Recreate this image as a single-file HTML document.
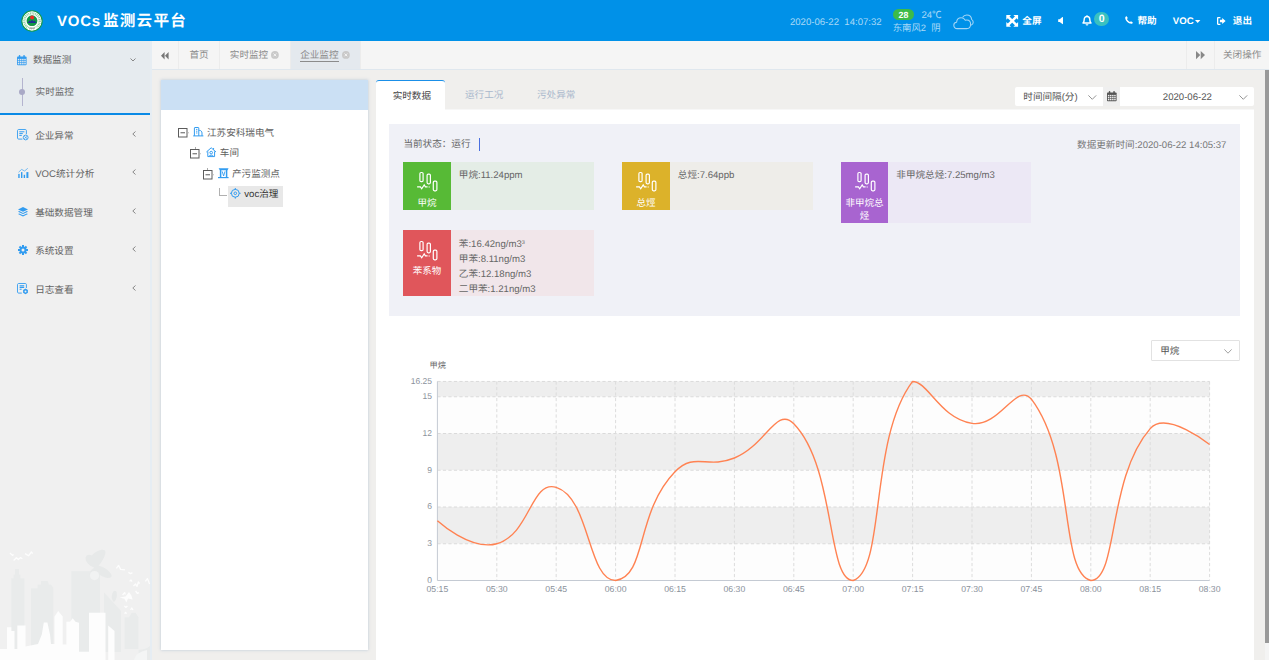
<!DOCTYPE html>
<html lang="zh"><head><meta charset="utf-8"><title>VOCs监测云平台</title>
<style>
html,body{margin:0;padding:0;}
body{text-rendering:geometricPrecision;width:1269px;height:660px;overflow:hidden;position:relative;background:#f0efed;font-family:"Liberation Sans","Noto Sans CJK SC",sans-serif;}
.t{position:absolute;white-space:nowrap;}
.r{position:absolute;}
svg{position:absolute;overflow:visible;}
.b{font-weight:bold;}
</style></head><body>

<div class="r" style="left:0px;top:0px;width:1269px;height:41px;background:#0091e8;"></div>
<svg style="left:20.6px;top:10.2px" width="22" height="22" viewBox="0 0 22 22">
<circle cx="11" cy="11" r="10.2" fill="#fff" stroke="#149a48" stroke-width="1.1"/>
<circle cx="11" cy="11" r="7.7" fill="none" stroke="#8fd3a4" stroke-width="2.4" stroke-dasharray="1 .7"/>
<path d="M5.4 16.6A8 8 0 0 0 16.6 16.6L15 19.4H7Z" fill="#fff"/>
<rect x="8.2" y="17.6" width="5.6" height="1.3" fill="#9a9a9a" opacity=".8"/>
<circle cx="11" cy="10.7" r="5.4" fill="#0f9a44"/>
<path d="M6 12.6A5.4 5.4 0 0 0 16 12.6L14.6 14.8 11 16.1 7.4 14.8Z" fill="#0c4a2c"/>
<path d="M6.6 13 L8.6 10.6 L9.6 11.6 L11 9.8 L12.4 11.6 L13.4 10.6 L15.4 13Z" fill="#1e2c96"/>
<circle cx="11.1" cy="7.5" r="2" fill="#ee2a24"/>
</svg>
<span class="t b" style="left:56.9px;top:11.60px;font-size:15px;line-height:20px;color:#fff;letter-spacing:0.8px;">VOCs</span>
<span class="t b" style="left:103px;top:11.90px;font-size:15.6px;line-height:20px;color:#fff;letter-spacing:1.2px;">监测云平台</span>
<span class="t " style="left:789.9px;top:16.00px;font-size:9.6px;line-height:14px;color:#a9d9f7;">2020-06-22&nbsp; 14:07:32</span>
<div class="r" style="left:892.7px;top:9px;width:21.3px;height:11.4px;background:#3dbb48;border-radius:6px;"></div>
<span class="t" style="left:803.40px;width:200px;text-align:center;top:8.80px;font-size:8.8px;line-height:12px;color:#fff;font-weight:bold;">28</span>
<span class="t " style="left:921.4px;top:9.00px;font-size:9.6px;line-height:14px;color:#a9d9f7;">24℃</span>
<span class="t " style="left:892.7px;top:20.80px;font-size:9.4px;line-height:14px;color:#a9d9f7;">东南风2&nbsp; 阴</span>
<svg style="left:953px;top:13.5px" width="21" height="16" viewBox="0 0 21 16" fill="none" stroke="#a4d6f6" stroke-width="1.05" stroke-linejoin="round">
<path d="M4.2 14.6 C2 14.6 .8 13 .8 11.3 C.8 9.6 2 8.3 3.6 8.2 C3.8 5.6 5.8 3.8 8.2 3.8 C10 3.8 11.5 4.8 12.3 6.3 C12.8 6.1 13.3 6 13.8 6 C16 6 17.6 7.8 17.6 10.2 C17.6 12.8 15.8 14.6 13.6 14.6 Z"/>
<path d="M9.5 3.6 C10.4 2 12 1 13.8 1 C16.4 1 18.4 2.9 18.6 5.4 C19.6 6 20.2 7.1 20.2 8.3 C20.2 9.6 19.4 10.8 18.2 11.3"/>
</svg>
<svg style="left:1006.4px;top:14.8px" width="12.4" height="11.8" viewBox="0 0 12 12" fill="#fff">
<path d="M0 0H4.8L0 4.8ZM12 0V4.8L7.2 0ZM0 12V7.2L4.8 12ZM12 12H7.2L12 7.2Z"/>
<path d="M1.6 1.6L10.4 10.4M10.4 1.6L1.6 10.4" stroke="#fff" stroke-width="2.5"/>
</svg>
<span class="t b" style="left:1022.3px;top:14.80px;font-size:9.6px;line-height:14px;color:#fff;">全屏</span>
<svg style="left:1057.6px;top:17px" width="5" height="7.2" viewBox="0 0 5 7.2" fill="#fff"><path d="M.2 2.3h1.5L4.4 .1Q5 -.2 5 .5v6.2Q5 7.4 4.4 7.1L1.7 4.9H.2z"/></svg>
<svg style="left:1082.3px;top:15.1px" width="10" height="10.6" viewBox="0 0 10 10.4" fill="none" stroke="#fff" stroke-width="1.45" stroke-linejoin="round">
<path d="M1 8 C2 7 2.2 6 2.2 4.4 C2.2 2.6 3.4 1.4 5 1.4 C6.6 1.4 7.8 2.6 7.8 4.4 C7.8 6 8 7 9 8 Z"/>
<path d="M5 .2v1.2M4 9.2 C4.2 10 5.8 10 6 9.2" stroke-width="1.1"/></svg>
<div class="r" style="left:1094.4px;top:12.2px;width:14.2px;height:14.2px;background:#3ac1c0;border-radius:7.1px;"></div>
<span class="t" style="left:1001.60px;width:200px;text-align:center;top:13.10px;font-size:10.6px;line-height:12px;color:#fff;font-weight:bold;">0</span>
<svg style="left:1125.1px;top:16.3px" width="8" height="8" viewBox="0 0 8 8" fill="#fff"><path d="M1.6 0.2 C1 0.2 .2 .9 .2 1.6 C.2 4.8 3.2 7.8 6.4 7.8 C7.1 7.8 7.8 7 7.8 6.4 L6 5.2 L5 6 C3.8 5.6 2.4 4.2 2 3 L2.8 2 Z"/></svg>
<span class="t b" style="left:1137.4px;top:14.80px;font-size:9.6px;line-height:14px;color:#fff;">帮助</span>
<span class="t b" style="left:1172.8px;top:14.80px;font-size:9.6px;line-height:14px;color:#fff;">VOC</span>
<svg style="left:1195px;top:20.3px" width="5.4" height="3" viewBox="0 0 5.4 3" fill="#fff"><path d="M0 0h5.4L2.7 3z"/></svg>
<svg style="left:1216.7px;top:16.6px" width="8.6" height="8" viewBox="0 0 8.6 8" fill="#fff">
<path d="M0 1.2 C0 .5 .5 0 1.2 0H3.4V1.3H1.5 C1.4 1.3 1.3 1.4 1.3 1.5V6.5 C1.3 6.6 1.4 6.7 1.5 6.7H3.4V8H1.2 C.5 8 0 7.5 0 6.8Z"/>
<path d="M2.9 2.8H5.2V1L8.6 4 5.2 7V5.2H2.9Z"/></svg>
<span class="t b" style="left:1232.8px;top:14.80px;font-size:9.6px;line-height:14px;color:#fff;">退出</span>
<div class="r" style="left:0px;top:41px;width:150px;height:619px;background:#f0f0f0;"></div>
<div class="r" style="left:150px;top:41px;width:1.5px;height:619px;background:#e6edf3;"></div>
<div class="r" style="left:0px;top:41px;width:150px;height:72px;background:#e6ebef;"></div>
<div class="r" style="left:0px;top:112.8px;width:150px;height:2.6px;background:#0a8ae6;"></div>
<svg style="left:17px;top:54.8px" width="9.6" height="10.2" viewBox="0 0 9.6 10.2">
<rect x="0" y="1.4" width="9.6" height="8.8" rx="1" fill="#329cf0"/>
<rect x="1.8" y="0" width="1.5" height="2.6" rx=".7" fill="#329cf0"/><rect x="6.3" y="0" width="1.5" height="2.6" rx=".7" fill="#329cf0"/>
<g fill="#e6ebef" opacity=".95" transform="translate(-.1 -.1) scale(1.02)">
<rect x=".9" y="3.9" width="1.5" height="1.4"/><rect x="3" y="3.9" width="1.5" height="1.4"/><rect x="5.1" y="3.9" width="1.5" height="1.4"/><rect x="7.2" y="3.9" width="1.5" height="1.4"/>
<rect x=".9" y="5.9" width="1.5" height="1.4"/><rect x="3" y="5.9" width="1.5" height="1.4"/><rect x="5.1" y="5.9" width="1.5" height="1.4"/><rect x="7.2" y="5.9" width="1.5" height="1.4"/>
<rect x=".9" y="7.9" width="1.5" height="1.4"/><rect x="3" y="7.9" width="1.5" height="1.4"/><rect x="5.1" y="7.9" width="1.5" height="1.4"/><rect x="7.2" y="7.9" width="1.5" height="1.4"/>
</g></svg>
<span class="t " style="left:32.9px;top:54.20px;font-size:9.6px;line-height:14px;color:#636363;">数据监测</span>
<svg style="left:130px;top:57.8px" width="6" height="4" viewBox="0 0 6 4" fill="none" stroke="#888" stroke-width="1"><path d="M.5 .5L3 3 5.5 .5"/></svg>
<div class="r" style="left:21.9px;top:78.2px;width:0.8px;height:27.6px;background:#b4b4cf;"></div>
<div class="r" style="left:19px;top:89px;width:6px;height:6px;background:#a9a9c6;border-radius:3px;"></div>
<span class="t " style="left:35.6px;top:86.40px;font-size:9.6px;line-height:14px;color:#6a6a6a;">实时监控</span>
<span class="t " style="left:35.2px;top:129.50px;font-size:9.6px;line-height:14px;color:#636363;">企业异常</span>
<svg style="left:132.4px;top:131.1px" width="4" height="6" viewBox="0 0 4 6" fill="none" stroke="#888" stroke-width="1"><path d="M3.5 .5L.8 3 3.5 5.5"/></svg>
<span class="t " style="left:35.2px;top:167.80px;font-size:9.6px;line-height:14px;color:#636363;">VOC统计分析</span>
<svg style="left:132.4px;top:169.4px" width="4" height="6" viewBox="0 0 4 6" fill="none" stroke="#888" stroke-width="1"><path d="M3.5 .5L.8 3 3.5 5.5"/></svg>
<span class="t " style="left:35.2px;top:206.50px;font-size:9.6px;line-height:14px;color:#636363;">基础数据管理</span>
<svg style="left:132.4px;top:208.1px" width="4" height="6" viewBox="0 0 4 6" fill="none" stroke="#888" stroke-width="1"><path d="M3.5 .5L.8 3 3.5 5.5"/></svg>
<span class="t " style="left:35.2px;top:244.60px;font-size:9.6px;line-height:14px;color:#636363;">系统设置</span>
<svg style="left:132.4px;top:246.2px" width="4" height="6" viewBox="0 0 4 6" fill="none" stroke="#888" stroke-width="1"><path d="M3.5 .5L.8 3 3.5 5.5"/></svg>
<span class="t " style="left:35.2px;top:283.50px;font-size:9.6px;line-height:14px;color:#636363;">日志查看</span>
<svg style="left:132.4px;top:285.1px" width="4" height="6" viewBox="0 0 4 6" fill="none" stroke="#888" stroke-width="1"><path d="M3.5 .5L.8 3 3.5 5.5"/></svg>
<svg style="left:17px;top:129.2px" width="11.6" height="11.6" viewBox="0 0 11.6 11.6" fill="none" stroke="#329cf0" stroke-width=".9">
<path d="M9.4 5.2V1.6 C9.4 1 9 .5 8.4 .5H1.6 C1 .5 .5 1 .5 1.6V9 C.5 9.6 1 10.1 1.6 10.1H5.4"/>
<path d="M2.3 2.8H7.4M2.3 4.6H5.8M2.3 6.4H4.8" stroke-width="1"/>
<circle cx="8.7" cy="8.5" r="2.4"/><path d="M7.4 7.4l2.6 2.2M10 7.4L7.4 9.6" stroke-width=".7"/></svg>
<svg style="left:17.7px;top:168px" width="10.6" height="10.2" viewBox="0 0 10.6 10.2" fill="#329cf0">
<rect x=".25" y="5.9" width="1.4" height="4.1"/><rect x="3" y="4.1" width="1.4" height="5.9"/><rect x="5.7" y="6.8" width="1.4" height="3.2"/><rect x="8.4" y="4.1" width="2" height="5.9"/>
<path d="M.5 4.3 L3.6 1.4 L6.6 3 L9.8 .3" fill="none" stroke="#329cf0" stroke-width=".8" opacity=".8"/></svg>
<svg style="left:17.8px;top:206.8px" width="10" height="9.6" viewBox="0 0 10 9.6" fill="#329cf0">
<path d="M5 0 L10 2.4 L5 4.8 L0 2.4Z"/>
<path d="M1.2 4.1 L0 4.7 L5 7.1 L10 4.7 L8.8 4.1 L5 5.9Z"/>
<path d="M1.2 6.4 L0 7 L5 9.4 L10 7 L8.8 6.4 L5 8.2Z"/></svg>
<svg style="left:18px;top:245.0px" width="10" height="10" viewBox="-5 -5 10 10">
<g fill="#329cf0"><circle r="3.5"/><rect x="-1" y="-5" width="2" height="3" transform="rotate(0)"/><rect x="-1" y="-5" width="2" height="3" transform="rotate(45)"/><rect x="-1" y="-5" width="2" height="3" transform="rotate(90)"/><rect x="-1" y="-5" width="2" height="3" transform="rotate(135)"/><rect x="-1" y="-5" width="2" height="3" transform="rotate(180)"/><rect x="-1" y="-5" width="2" height="3" transform="rotate(225)"/><rect x="-1" y="-5" width="2" height="3" transform="rotate(270)"/><rect x="-1" y="-5" width="2" height="3" transform="rotate(315)"/></g><circle r="1.5" fill="#f0f0f0"/></svg>
<svg style="left:17px;top:283px" width="11.6" height="11.6" viewBox="0 0 11.6 11.6" fill="none" stroke="#329cf0" stroke-width=".9">
<path d="M9.4 5V1.6 C9.4 1 9 .5 8.4 .5H1.6 C1 .5 .5 1 .5 1.6V9 C.5 9.6 1 10.1 1.6 10.1H4.8"/>
<path d="M2.6 2.8H7.2M2.6 4.4H7.2M2.6 6.2H4.6" stroke-width="1.1"/>
<path d="M8.5 5.6L10.9 7V9.8L8.5 11.2 6.1 9.8V7Z" fill="#329cf0" stroke="none"/><circle cx="8.5" cy="8.4" r="1" fill="#f0f0f0" stroke="none"/></svg>
<svg style="left:0;top:540px" width="150" height="120" viewBox="0 0 150 120">
<g fill="#e9ebeb">
<path d="M11.3 109V38.2H13.6V34.5H15V29H19V34.5H20.4V38.2H24.5V109Z"/>
<path d="M31 107V48.2H37.6V44.5H41V41H47.6L49 44.5H51L53.3 48.2V107Z"/>
<path d="M71.3 112V31.3H100V112Z"/>
<path d="M104 112V52.4L121 71V112Z"/>
<path d="M124.5 109V77.3H129L131.8 72.7H135.5L138.5 77.3V109Z"/>
<path d="M138.5 110Q146 109.4 150 106V120H138.5Z"/>
</g>
<g fill="#e7e9e9">
<path d="M85.6 19 C85 15.5 88.5 13.8 92 15.6 C95 11.5 102 8.6 105 10.4 C107 13 102.5 21.5 98.6 25.6 C103.5 27 110.5 31 111.8 36 C110.5 39.5 103.5 38 98 33.4 C96 36.5 91.5 38.4 89.5 35.6 C88.8 32.6 91.6 29.4 94.4 27.6 C90.4 26.4 86.2 23 85.6 19Z"/>
<path d="M112 55 C112.6 51 115 49.6 116.4 51.6 C117.6 55.4 116.4 60.4 113.8 62 C112 60.4 111.4 57.6 112 55Z"/>
</g>
<circle cx="94.5" cy="35.6" r="4.6" fill="#f1f2f2"/>
<g fill="#fdfdfd">
<path d="M0 109H7V87.3H11.3V91H14.5V109H17.3V85.5H25.5V106.4L38 104L39 120H0Z"/>
<path d="M38 120V104L41.8 94.5L43.8 82.6H47.4L50 94.5L51 104V120Z"/>
<path d="M51 120V104L54.5 104V76.4L58.2 71L62.7 76.4V104.5H66.4V81.8H70L72.7 78.2L75.5 81.8L79 82.7V111.8H89V72.7H105.5V120Z"/>
<path d="M108.2 120V85.5L114.5 91V120Z"/>
<path d="M134 120Q136 112 147 110V120Z" fill="#f4f5f5"/>
</g>
<g stroke="#fdfdfd" stroke-width="1.3" fill="none" stroke-linejoin="round">
<path d="M10 13L12.4 15.4 13.6 14.4M13.6 20.4L16.4 17.8 18.4 19.6 20.4 17.6 22.4 18.8M25 13.6L28.6 15.8 31.4 12 32.6 13.6" />
<path d="M116.4 28.4L118.6 25.4 120.6 29.4 125 29.8M128.4 32.4L130.6 33.6 132.4 32.6M129.6 41.4L131 40 132 41.6M133.4 46L135.6 44 137 46.4 138.4 42 139.6 43.6M145.4 41.4L147.4 38.6 149.6 44M135.6 51L137.4 53.4 139 52.6M122.6 55L124.6 52.6 125.4 54.4M124.4 66L126 67.4 127.4 66M130.6 70L131.8 68 133 70M124.6 73.6L125.6 72.4 126.6 73.6" />
</g>
<path d="M119.6 57.6L125.6 56.6 129 52 131.4 55.6 132.6 59.4 128 58.6 126.4 62.4 124.4 58.8Z" fill="#fdfdfd"/>
</svg>
<div class="r" style="left:151.5px;top:41px;width:1117.5px;height:28px;background:#f5f5f5;"></div>
<div class="r" style="left:151.5px;top:69px;width:1117.5px;height:1px;background:#dfe7ee;"></div>
<div class="r" style="left:290px;top:41px;width:70.5px;height:28px;background:#e4e9ee;"></div>
<div class="r" style="left:178px;top:41px;width:0.7px;height:28px;background:#ececec;"></div>
<div class="r" style="left:219.3px;top:41px;width:0.7px;height:28px;background:#ececec;"></div>
<div class="r" style="left:290px;top:41px;width:0.7px;height:28px;background:#ececec;"></div>
<div class="r" style="left:360.3px;top:41px;width:0.7px;height:28px;background:#ececec;"></div>
<div class="r" style="left:1186.3px;top:41px;width:0.7px;height:28px;background:#ececec;"></div>
<div class="r" style="left:1214px;top:41px;width:0.7px;height:28px;background:#ececec;"></div>
<svg style="left:160.8px;top:51.6px" width="7.6" height="7.6" viewBox="0 0 7.6 7.6" fill="#777"><path d="M3.6 0v7.6L0 3.8zM7.6 0v7.6L4 3.8z"/></svg>
<span class="t " style="left:189.5px;top:48.90px;font-size:9.6px;line-height:14px;color:#8c8c8c;">首页</span>
<span class="t " style="left:229.8px;top:48.90px;font-size:9.6px;line-height:14px;color:#8c8c8c;">实时监控</span>
<span class="t " style="left:300.2px;top:48.90px;font-size:9.6px;line-height:14px;color:#8c8c8c;">企业监控</span>
<div class="r" style="left:300.2px;top:60.6px;width:38.4px;height:0.7px;background:#8c8c8c;"></div>
<svg style="left:271.3px;top:51.2px" width="7.8" height="7.8" viewBox="0 0 8 8"><circle cx="4" cy="4" r="4" fill="#c9c9c9"/><path d="M2.6 2.6l2.8 2.8M5.4 2.6L2.6 5.4" stroke="#f5f5f5" stroke-width="1"/></svg>
<svg style="left:341.70000000000005px;top:51.2px" width="7.8" height="7.8" viewBox="0 0 8 8"><circle cx="4" cy="4" r="4" fill="#c9c9c9"/><path d="M2.6 2.6l2.8 2.8M5.4 2.6L2.6 5.4" stroke="#f5f5f5" stroke-width="1"/></svg>
<svg style="left:1195.6px;top:51.4px" width="9" height="8.2" preserveAspectRatio="none" viewBox="0 0 7.6 7.6" fill="#888"><path d="M0 0v7.6L3.6 3.8zM4 0v7.6L7.6 3.8z"/></svg>
<span class="t " style="left:1223px;top:49.20px;font-size:9.6px;line-height:14px;color:#8c8c8c;">关闭操作</span>
<div class="r" style="left:161.3px;top:80.3px;width:206.7px;height:569.7px;background:#fff;box-shadow:0 0 3px rgba(100,140,180,.38);"></div>
<div class="r" style="left:161.3px;top:80.3px;width:206.7px;height:30.2px;background:#cbe0f4;"></div>
<svg style="left:177.8px;top:128.2px" width="13" height="10" viewBox="0 0 13 10"><rect x=".5" y=".5" width="8.5" height="8.5" fill="#fff" stroke="#5c5c5c" stroke-width="1"/><path d="M2.5 4.75h4.5" stroke="#6a6a6a" stroke-width="1.1"/><path d="M10 4.75h2" stroke="#aaa" stroke-width=".8" stroke-dasharray="1 1"/></svg>
<svg style="left:193.2px;top:127.4px" width="10.4" height="9.4" viewBox="0 0 10.4 9.4" fill="none" stroke="#329cf0" stroke-width="1">
<path d="M.2 8.9H10.4"/><path d="M1.4 8.9V1 C1.4 .7 1.6 .5 1.9 .5H5.3 C5.6 .5 5.8 .7 5.8 1V8.9"/><path d="M5.8 3.4H6.6 C8 3.4 9 4.6 9 6V8.9"/>
<path d="M3 2.4h1.4M3 4.2h1.4M3 6h1.4" stroke-width=".9"/></svg>
<span class="t " style="left:207px;top:126.50px;font-size:9.6px;line-height:14px;color:#5e5e5e;">江苏安科瑞电气</span>
<svg style="left:190.2px;top:149.2px" width="13" height="10" viewBox="0 0 13 10"><rect x=".5" y=".5" width="8.5" height="8.5" fill="#fff" stroke="#5c5c5c" stroke-width="1"/><path d="M2.5 4.75h4.5" stroke="#6a6a6a" stroke-width="1.1"/><path d="M10 4.75h2" stroke="#aaa" stroke-width=".8" stroke-dasharray="1 1"/></svg><div class="r" style="left:194.6px;top:146.79999999999998px;width:0.8px;height:2.4px;background:#aaa;"></div>
<svg style="left:205.6px;top:147.2px" width="10.4" height="10.4" viewBox="0 0 10.4 10.4" fill="none" stroke="#329cf0" stroke-width="1" stroke-linejoin="round">
<path d="M.4 5 L5.2 .8 L10 5"/><path d="M1.8 4.4V9.6H8.6V4.4"/><path d="M7.6 1v1.6" />
<circle cx="5.2" cy="5.6" r="1.3"/><path d="M3 9.2 C3.4 7.8 7 7.8 7.4 9.2" /></svg>
<span class="t " style="left:219.8px;top:147.10px;font-size:9.6px;line-height:14px;color:#5e5e5e;">车间</span>
<svg style="left:202.7px;top:170px" width="13" height="10" viewBox="0 0 13 10"><rect x=".5" y=".5" width="8.5" height="8.5" fill="#fff" stroke="#5c5c5c" stroke-width="1"/><path d="M2.5 4.75h4.5" stroke="#6a6a6a" stroke-width="1.1"/><path d="M10 4.75h2" stroke="#aaa" stroke-width=".8" stroke-dasharray="1 1"/></svg><div class="r" style="left:207.1px;top:167.6px;width:0.8px;height:2.4px;background:#aaa;"></div>
<svg style="left:218px;top:168px" width="10.6" height="10.2" viewBox="0 0 10.6 10.2" fill="none" stroke="#329cf0" stroke-width="1">
<path d="M.6 .3H10.6L9.6 2.2H1.8Z" fill="#329cf0" stroke="none"/><path d="M2.6 2V9M8.6 2V9" stroke-width="1.5"/><path d="M4.2 3.4 L5.6 8 L7 3.4" stroke-width=".9"/><path d="M0 9.6H10.6" stroke-width="1.2"/></svg>
<span class="t " style="left:232px;top:167.50px;font-size:9.6px;line-height:14px;color:#5e5e5e;">产污监测点</span>
<div class="r" style="left:219.4px;top:188.2px;width:0.8px;height:7.2px;background:#b0b0b0;"></div>
<div class="r" style="left:219.4px;top:194.8px;width:7.2px;height:0.8px;background:#b0b0b0;"></div>
<div class="r" style="left:228.2px;top:186.1px;width:55px;height:20.5px;background:#e8e8e8;"></div>
<svg style="left:230.4px;top:188.2px" width="10.6" height="10.6" viewBox="0 0 10.6 10.6" fill="none" stroke="#329cf0" stroke-width="1">
<circle cx="5.3" cy="5.3" r="3.9"/><circle cx="5.3" cy="5.3" r="1.3"/><path d="M5.3 0v1.6M5.3 9v1.6M0 5.3h1.6M9 5.3h1.6"/></svg>
<span class="t " style="left:244.3px;top:188.00px;font-size:9.6px;line-height:14px;color:#333;">voc治理</span>
<div class="r" style="left:375.8px;top:110px;width:878px;height:550px;background:#fff;"></div>
<div class="r" style="left:375.8px;top:109.3px;width:878px;height:0.8px;background:#f7f7f7;"></div>
<div class="r" style="left:375.8px;top:80.2px;width:69.4px;height:30px;background:#fff;border-top:1.6px solid #1a8fe8;border-radius:3px 3px 0 0;box-sizing:border-box;"></div>
<span class="t " style="left:392.7px;top:89.60px;font-size:9.6px;line-height:14px;color:#444;">实时数据</span>
<span class="t " style="left:465px;top:88.80px;font-size:9.6px;line-height:14px;color:#a9b8cc;">运行工况</span>
<span class="t " style="left:537px;top:88.80px;font-size:9.6px;line-height:14px;color:#a9b8cc;">污处异常</span>
<div class="r" style="left:1014.8px;top:86.5px;width:88.4px;height:19.5px;background:#fff;border-radius:2px 0 0 2px;"></div>
<span class="t " style="left:1023.3px;top:90.90px;font-size:9.6px;line-height:14px;color:#555;">时间间隔(分)</span>
<svg style="left:1088px;top:94.6px" width="8.6" height="5" viewBox="0 0 8.6 5" fill="none" stroke="#888" stroke-width=".9"><path d="M.4 .4L4.3 4.3 8.2 .4"/></svg>
<div class="r" style="left:1103.2px;top:86.5px;width:17.2px;height:19.5px;background:#efefef;"></div>
<svg style="left:1107px;top:91.2px" width="9.6" height="10.2" viewBox="0 0 9.6 10.2">
<rect x="0" y="1.4" width="9.6" height="8.8" rx=".8" fill="#555"/>
<rect x="1.8" y="0" width="1.5" height="2.6" rx=".7" fill="#555"/><rect x="6.3" y="0" width="1.5" height="2.6" rx=".7" fill="#555"/>
<g fill="#efefef">
<rect x=".9" y="3.9" width="1.5" height="1.4"/><rect x="3" y="3.9" width="1.5" height="1.4"/><rect x="5.1" y="3.9" width="1.5" height="1.4"/><rect x="7.2" y="3.9" width="1.5" height="1.4"/>
<rect x=".9" y="5.9" width="1.5" height="1.4"/><rect x="3" y="5.9" width="1.5" height="1.4"/><rect x="5.1" y="5.9" width="1.5" height="1.4"/><rect x="7.2" y="5.9" width="1.5" height="1.4"/>
<rect x=".9" y="7.9" width="1.5" height="1.4"/><rect x="3" y="7.9" width="1.5" height="1.4"/><rect x="5.1" y="7.9" width="1.5" height="1.4"/><rect x="7.2" y="7.9" width="1.5" height="1.4"/>
</g></svg>
<div class="r" style="left:1120.4px;top:86.5px;width:133.4px;height:19.5px;background:#fff;border-radius:0 2px 2px 0;"></div>
<span class="t " style="left:1162.8px;top:90.90px;font-size:9.6px;line-height:14px;color:#555;">2020-06-22</span>
<svg style="left:1239px;top:94.6px" width="8.6" height="5" viewBox="0 0 8.6 5" fill="none" stroke="#888" stroke-width=".9"><path d="M.4 .4L4.3 4.3 8.2 .4"/></svg>
<div class="r" style="left:389.2px;top:123.8px;width:850.8px;height:192.2px;background:#f0f1f7;"></div>
<span class="t " style="left:403.4px;top:138.40px;font-size:9.6px;line-height:14px;color:#666;">当前状态：运行</span>
<div class="r" style="left:479.1px;top:137.5px;width:1px;height:13.6px;background:#4a6fe0;"></div>
<span class="t" style="right:42.60px;top:138.60px;font-size:9.6px;line-height:14px;color:#777;">数据更新时间:2020-06-22 14:05:37</span>
<div class="r" style="left:403px;top:161.6px;width:47.6px;height:48px;background:#57ba36;"></div><div class="r" style="left:450.6px;top:161.6px;width:143.2px;height:48px;background:#e4ede6;"></div><svg style="left:417px;top:172.29999999999998px" width="21.4" height="20" viewBox="0 0 21.4 20" fill="none" stroke="#fff" stroke-width="1.2">
<rect x="2.9" y=".5" width="3.2" height="9.2" rx="1.2"/><rect x="10.1" y="2.1" width="3.3" height="9.7" rx="1.2"/><rect x="16.3" y="9.2" width="3.6" height="9.6" rx="1.2"/>
<path d="M.1 14.9H3.4L4.7 16.8 7.2 12.9 8.4 14.9H10.6M11.6 15h1.2" stroke-width="1.1"/></svg><span class="t" style="left:326.90px;width:200px;text-align:center;top:196.80px;font-size:9.5px;line-height:13px;color:#fff;">甲烷</span><span class="t " style="left:458.8px;top:168.80px;font-size:9.6px;line-height:14px;color:#666;">甲烷:11.24ppm</span>
<div class="r" style="left:622px;top:161.6px;width:47.6px;height:48px;background:#dcb22a;"></div><div class="r" style="left:669.6px;top:161.6px;width:143.2px;height:48px;background:#eeede9;"></div><svg style="left:636px;top:172.29999999999998px" width="21.4" height="20" viewBox="0 0 21.4 20" fill="none" stroke="#fff" stroke-width="1.2">
<rect x="2.9" y=".5" width="3.2" height="9.2" rx="1.2"/><rect x="10.1" y="2.1" width="3.3" height="9.7" rx="1.2"/><rect x="16.3" y="9.2" width="3.6" height="9.6" rx="1.2"/>
<path d="M.1 14.9H3.4L4.7 16.8 7.2 12.9 8.4 14.9H10.6M11.6 15h1.2" stroke-width="1.1"/></svg><span class="t" style="left:545.90px;width:200px;text-align:center;top:196.80px;font-size:9.5px;line-height:13px;color:#fff;">总烴</span><span class="t " style="left:677.8px;top:168.80px;font-size:9.6px;line-height:14px;color:#666;">总烴:7.64ppb</span>
<div class="r" style="left:840.5px;top:161.6px;width:47.6px;height:61.7px;background:#a864d0;"></div><div class="r" style="left:888.1px;top:161.6px;width:143.2px;height:61.7px;background:#ece8f5;"></div><svg style="left:854.5px;top:172.29999999999998px" width="21.4" height="20" viewBox="0 0 21.4 20" fill="none" stroke="#fff" stroke-width="1.2">
<rect x="2.9" y=".5" width="3.2" height="9.2" rx="1.2"/><rect x="10.1" y="2.1" width="3.3" height="9.7" rx="1.2"/><rect x="16.3" y="9.2" width="3.6" height="9.6" rx="1.2"/>
<path d="M.1 14.9H3.4L4.7 16.8 7.2 12.9 8.4 14.9H10.6M11.6 15h1.2" stroke-width="1.1"/></svg><span class="t" style="left:764.40px;width:200px;text-align:center;top:196.80px;font-size:9.5px;line-height:13px;color:#fff;">非甲烷总</span><span class="t" style="left:764.40px;width:200px;text-align:center;top:210.10px;font-size:9.5px;line-height:13px;color:#fff;">烃</span><span class="t " style="left:896.3px;top:168.80px;font-size:9.6px;line-height:14px;color:#666;">非甲烷总烃:7.25mg/m3</span>
<div class="r" style="left:403px;top:230px;width:47.6px;height:66.4px;background:#e0565b;"></div><div class="r" style="left:450.6px;top:230px;width:143.2px;height:66.4px;background:#f1e6ea;"></div><svg style="left:417px;top:240.7px" width="21.4" height="20" viewBox="0 0 21.4 20" fill="none" stroke="#fff" stroke-width="1.2">
<rect x="2.9" y=".5" width="3.2" height="9.2" rx="1.2"/><rect x="10.1" y="2.1" width="3.3" height="9.7" rx="1.2"/><rect x="16.3" y="9.2" width="3.6" height="9.6" rx="1.2"/>
<path d="M.1 14.9H3.4L4.7 16.8 7.2 12.9 8.4 14.9H10.6M11.6 15h1.2" stroke-width="1.1"/></svg><span class="t" style="left:326.90px;width:200px;text-align:center;top:265.20px;font-size:9.5px;line-height:13px;color:#fff;">苯系物</span><span class="t " style="left:458.8px;top:237.90px;font-size:9.6px;line-height:14px;color:#666;">苯:16.42ng/m3<span style='font-size:5.5px;position:relative;top:-3.4px'>3</span></span><span class="t " style="left:458.8px;top:253.00px;font-size:9.6px;line-height:14px;color:#666;">甲苯:8.11ng/m3</span><span class="t " style="left:458.8px;top:268.10px;font-size:9.6px;line-height:14px;color:#666;">乙苯:12.18ng/m3</span><span class="t " style="left:458.8px;top:283.20px;font-size:9.6px;line-height:14px;color:#666;">二甲苯:1.21ng/m3</span>
<div class="r" style="left:1150.8px;top:340px;width:89px;height:20.8px;background:#fff;border:1px solid #e2e2e2;box-sizing:border-box;border-radius:1px;"></div>
<span class="t " style="left:1160.2px;top:344.60px;font-size:9.6px;line-height:14px;color:#555;">甲烷</span>
<svg style="left:1224.4px;top:349px" width="8" height="5" viewBox="0 0 8 5" fill="none" stroke="#999" stroke-width=".9"><path d="M.4 .4L4 4.2 7.6 .4"/></svg>
<svg style="left:0;top:0" width="1269" height="660" viewBox="0 0 1269 660"><rect x="437.4" y="381.44" width="772.20" height="15.31" fill="#eeeeee"/><rect x="437.4" y="396.75" width="772.20" height="36.75" fill="#fdfdfd"/><rect x="437.4" y="433.50" width="772.20" height="36.75" fill="#eeeeee"/><rect x="437.4" y="470.25" width="772.20" height="36.75" fill="#fdfdfd"/><rect x="437.4" y="507.00" width="772.20" height="36.75" fill="#eeeeee"/><rect x="437.4" y="543.75" width="772.20" height="36.75" fill="#fdfdfd"/><path d="M437.4 543.75H1209.6" stroke="#dadada" stroke-width="1" stroke-dasharray="3.2 2.3" fill="none"/><path d="M437.4 507.00H1209.6" stroke="#dadada" stroke-width="1" stroke-dasharray="3.2 2.3" fill="none"/><path d="M437.4 470.25H1209.6" stroke="#dadada" stroke-width="1" stroke-dasharray="3.2 2.3" fill="none"/><path d="M437.4 433.50H1209.6" stroke="#dadada" stroke-width="1" stroke-dasharray="3.2 2.3" fill="none"/><path d="M437.4 396.75H1209.6" stroke="#dadada" stroke-width="1" stroke-dasharray="3.2 2.3" fill="none"/><path d="M437.4 381.44H1209.6" stroke="#dadada" stroke-width="1" stroke-dasharray="3.2 2.3" fill="none"/><path d="M496.80 381.44V580.5" stroke="#dcdcdc" stroke-width="1" stroke-dasharray="3.2 2.3" fill="none"/><path d="M556.20 381.44V580.5" stroke="#dcdcdc" stroke-width="1" stroke-dasharray="3.2 2.3" fill="none"/><path d="M615.60 381.44V580.5" stroke="#dcdcdc" stroke-width="1" stroke-dasharray="3.2 2.3" fill="none"/><path d="M675.00 381.44V580.5" stroke="#dcdcdc" stroke-width="1" stroke-dasharray="3.2 2.3" fill="none"/><path d="M734.40 381.44V580.5" stroke="#dcdcdc" stroke-width="1" stroke-dasharray="3.2 2.3" fill="none"/><path d="M793.80 381.44V580.5" stroke="#dcdcdc" stroke-width="1" stroke-dasharray="3.2 2.3" fill="none"/><path d="M853.20 381.44V580.5" stroke="#dcdcdc" stroke-width="1" stroke-dasharray="3.2 2.3" fill="none"/><path d="M912.60 381.44V580.5" stroke="#dcdcdc" stroke-width="1" stroke-dasharray="3.2 2.3" fill="none"/><path d="M972.00 381.44V580.5" stroke="#dcdcdc" stroke-width="1" stroke-dasharray="3.2 2.3" fill="none"/><path d="M1031.40 381.44V580.5" stroke="#dcdcdc" stroke-width="1" stroke-dasharray="3.2 2.3" fill="none"/><path d="M1090.80 381.44V580.5" stroke="#dcdcdc" stroke-width="1" stroke-dasharray="3.2 2.3" fill="none"/><path d="M1150.20 381.44V580.5" stroke="#dcdcdc" stroke-width="1" stroke-dasharray="3.2 2.3" fill="none"/><path d="M1209.60 381.44V580.5" stroke="#dcdcdc" stroke-width="1" stroke-dasharray="3.2 2.3" fill="none"/><path d="M437.4 381.44V580.5H1209.6" stroke="#c4cad3" stroke-width="1" fill="none"/><path d="M437.40 520.84C437.40 520.84 470.82 551.06 496.80 543.75C530.22 534.34 530.91 479.58 556.20 487.40C590.31 497.95 587.61 580.50 615.60 580.50C647.01 576.35 635.18 512.78 675.00 471.72C694.58 451.53 706.45 469.30 734.40 458.00C765.85 445.29 776.56 405.92 793.80 423.70C835.96 467.17 826.67 580.50 853.20 580.50C886.07 568.81 868.60 439.65 912.60 381.44C928.00 381.44 940.44 418.61 972.00 423.33C999.84 427.49 1016.46 381.44 1031.40 399.20C1075.86 458.02 1058.78 572.58 1090.80 580.50C1118.18 580.50 1107.06 477.97 1150.20 428.60C1166.46 409.98 1209.60 444.52 1209.60 444.52" stroke="#ff8252" stroke-width="1.4" fill="none" stroke-linejoin="round"/></svg>
<span class="t " style="left:429.5px;top:359.40px;font-size:8.2px;line-height:14px;color:#666;">甲烷</span>
<span class="t" style="right:837.00px;top:374.84px;font-size:8.5px;line-height:12px;color:#8a919b;">16.25</span>
<span class="t" style="right:837.00px;top:390.15px;font-size:8.5px;line-height:12px;color:#8a919b;">15</span>
<span class="t" style="right:837.00px;top:426.90px;font-size:8.5px;line-height:12px;color:#8a919b;">12</span>
<span class="t" style="right:837.00px;top:463.65px;font-size:8.5px;line-height:12px;color:#8a919b;">9</span>
<span class="t" style="right:837.00px;top:500.40px;font-size:8.5px;line-height:12px;color:#8a919b;">6</span>
<span class="t" style="right:837.00px;top:537.15px;font-size:8.5px;line-height:12px;color:#8a919b;">3</span>
<span class="t" style="right:837.00px;top:573.90px;font-size:8.5px;line-height:12px;color:#8a919b;">0</span>
<span class="t" style="left:407.40px;width:60px;text-align:center;top:583.40px;font-size:8.7px;line-height:12px;color:#8a919b;">05:15</span>
<span class="t" style="left:466.80px;width:60px;text-align:center;top:583.40px;font-size:8.7px;line-height:12px;color:#8a919b;">05:30</span>
<span class="t" style="left:526.20px;width:60px;text-align:center;top:583.40px;font-size:8.7px;line-height:12px;color:#8a919b;">05:45</span>
<span class="t" style="left:585.60px;width:60px;text-align:center;top:583.40px;font-size:8.7px;line-height:12px;color:#8a919b;">06:00</span>
<span class="t" style="left:645.00px;width:60px;text-align:center;top:583.40px;font-size:8.7px;line-height:12px;color:#8a919b;">06:15</span>
<span class="t" style="left:704.40px;width:60px;text-align:center;top:583.40px;font-size:8.7px;line-height:12px;color:#8a919b;">06:30</span>
<span class="t" style="left:763.80px;width:60px;text-align:center;top:583.40px;font-size:8.7px;line-height:12px;color:#8a919b;">06:45</span>
<span class="t" style="left:823.20px;width:60px;text-align:center;top:583.40px;font-size:8.7px;line-height:12px;color:#8a919b;">07:00</span>
<span class="t" style="left:882.60px;width:60px;text-align:center;top:583.40px;font-size:8.7px;line-height:12px;color:#8a919b;">07:15</span>
<span class="t" style="left:942.00px;width:60px;text-align:center;top:583.40px;font-size:8.7px;line-height:12px;color:#8a919b;">07:30</span>
<span class="t" style="left:1001.40px;width:60px;text-align:center;top:583.40px;font-size:8.7px;line-height:12px;color:#8a919b;">07:45</span>
<span class="t" style="left:1060.80px;width:60px;text-align:center;top:583.40px;font-size:8.7px;line-height:12px;color:#8a919b;">08:00</span>
<span class="t" style="left:1120.20px;width:60px;text-align:center;top:583.40px;font-size:8.7px;line-height:12px;color:#8a919b;">08:15</span>
<span class="t" style="left:1179.60px;width:60px;text-align:center;top:583.40px;font-size:8.7px;line-height:12px;color:#8a919b;">08:30</span>
<div class="r" style="left:1259px;top:70px;width:10px;height:590px;background:#f0efed;"></div>
<div class="r" style="left:1265px;top:70px;width:4px;height:573px;background:#999;"></div>
<div class="r" style="left:1265px;top:643px;width:4px;height:17px;background:#f4f4f4;"></div>
</body></html>
